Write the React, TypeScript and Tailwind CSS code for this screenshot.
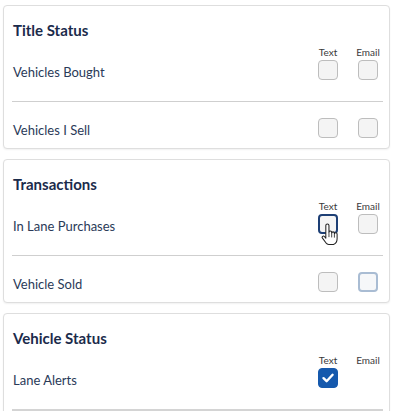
import React from "react";

type Box = "off" | "hover" | "focus" | "on";

function Check({ state, cursor }: { state: Box; cursor?: boolean }) {
  const base = "relative w-[20px] h-[20px] rounded-[4px] flex items-center justify-center";
  const cls =
    state === "on"
      ? "bg-[#1559ad] border border-[#1559ad]"
      : state === "hover"
      ? "bg-[#f5f5f5] border-2 border-[#1d3f75]"
      : state === "focus"
      ? "bg-[#f6f7f9] border-2 border-[#a9bcd3]"
      : "bg-[#f4f4f4] border border-[#bdbdbd]";
  return (
    <div className={`${base} ${cls}`}>
      {state === "on" && (
        <svg width="14" height="14" viewBox="0 0 14 14">
          <path d="M2.5 7.2 L5.6 10.2 L11.6 3.8" fill="none" stroke="#fff" strokeWidth="2.4" strokeLinecap="round" strokeLinejoin="round" />
        </svg>
      )}
      {cursor && (
        <svg className="absolute left-[1px] top-[7px]" width="18" height="23" viewBox="0 0 17 22">
          <path
            d="M4.5 11 V2.5 a1.5 1.5 0 0 1 3 0 V9 a1.3 1.3 0 0 1 2.6 0 V9.8 a1.3 1.3 0 0 1 2.6 0 V10.6 a1.3 1.3 0 0 1 2.6 0 V15 c0 2.5 -1.5 4.8 -3.5 5.5 H7.2 c-1.2 0 -2 -0.8 -2.8 -1.8 L1.3 14.5 a1.2 1.2 0 0 1 1.8 -1.6 L4.5 14.5 Z"
            fill="#fff"
            stroke="#222"
            strokeWidth="1"
            strokeLinejoin="round"
          />
          <path d="M7.5 9.5 V13.5 M10.1 10 V13.8 M12.7 10.8 V14" stroke="#222" strokeWidth="0.8" fill="none" />
        </svg>
      )}
    </div>
  );
}

function Row({
  label,
  text,
  email,
  showLabels,
  showEmail = true,
  cursor,
}: {
  label: string;
  text: Box;
  email: Box;
  showLabels?: boolean;
  showEmail?: boolean;
  cursor?: boolean;
}) {
  if (showLabels) {
    return (
      <div className="flex items-end justify-between pt-[6px] pb-[21px]">
        <span className="text-[13px] leading-[16px] text-[#2a3a58] mb-[0px] pl-[1px]">{label}</span>
        <div className="flex gap-[20px] mr-[5px]">
          <div className="flex flex-col items-center w-[20px]">
            <span className="text-[10px] leading-[12px] text-[#3a3a3a] whitespace-nowrap mb-[2px]">Text</span>
            <Check state={text} cursor={cursor} />
          </div>
          <div className="flex flex-col items-center w-[20px]">
            <span className="text-[10px] leading-[12px] text-[#3a3a3a] whitespace-nowrap mb-[2px]">Email</span>
            {showEmail ? <Check state={email} /> : <div className="w-[20px] h-[20px]" />}
          </div>
        </div>
      </div>
    );
  }
  return (
    <div className="flex items-center justify-between pt-[15px] pb-[10px]">
      <span className="text-[13px] leading-[16px] text-[#2a3a58] pt-[5px] pl-[1px]">{label}</span>
      <div className="flex gap-[20px] mr-[5px]">
        <Check state={text} />
        <Check state={email} />
      </div>
    </div>
  );
}

function Card({ title, children }: { title: string; children: React.ReactNode }) {
  return (
    <div className="ml-[3px] w-[387px] border border-[#dedede] rounded-[4px] bg-white shadow-[0_1px_2px_rgba(0,0,0,0.06)] pt-[14px] pl-[8px] pr-[6px]">
      <div className="text-[15px] leading-[20px] font-bold text-[#1b2b4b] pl-[1px]">{title}</div>
      {children}
    </div>
  );
}

export default function App() {
  return (
    <div className="w-[400px] h-[411px] overflow-hidden bg-white pt-[5px] flex flex-col gap-[10px] font-['Lato',sans-serif]">
      <Card title="Title Status">
        <Row label="Vehicles Bought" text="off" email="off" showLabels />
        <div className="h-px bg-[#cfcfcf]" />
        <Row label="Vehicles I Sell" text="off" email="off" />
      </Card>
      <Card title="Transactions">
        <Row label="In Lane Purchases" text="hover" email="off" showLabels cursor />
        <div className="h-px bg-[#cfcfcf]" />
        <Row label="Vehicle Sold" text="off" email="focus" />
      </Card>
      <Card title="Vehicle Status">
        <Row label="Lane Alerts" text="on" email="off" showLabels showEmail={false} />
        <div className="h-[2px] bg-[#d4d4d4]" />
        <div className="h-[40px]" />
      </Card>
    </div>
  );
}
